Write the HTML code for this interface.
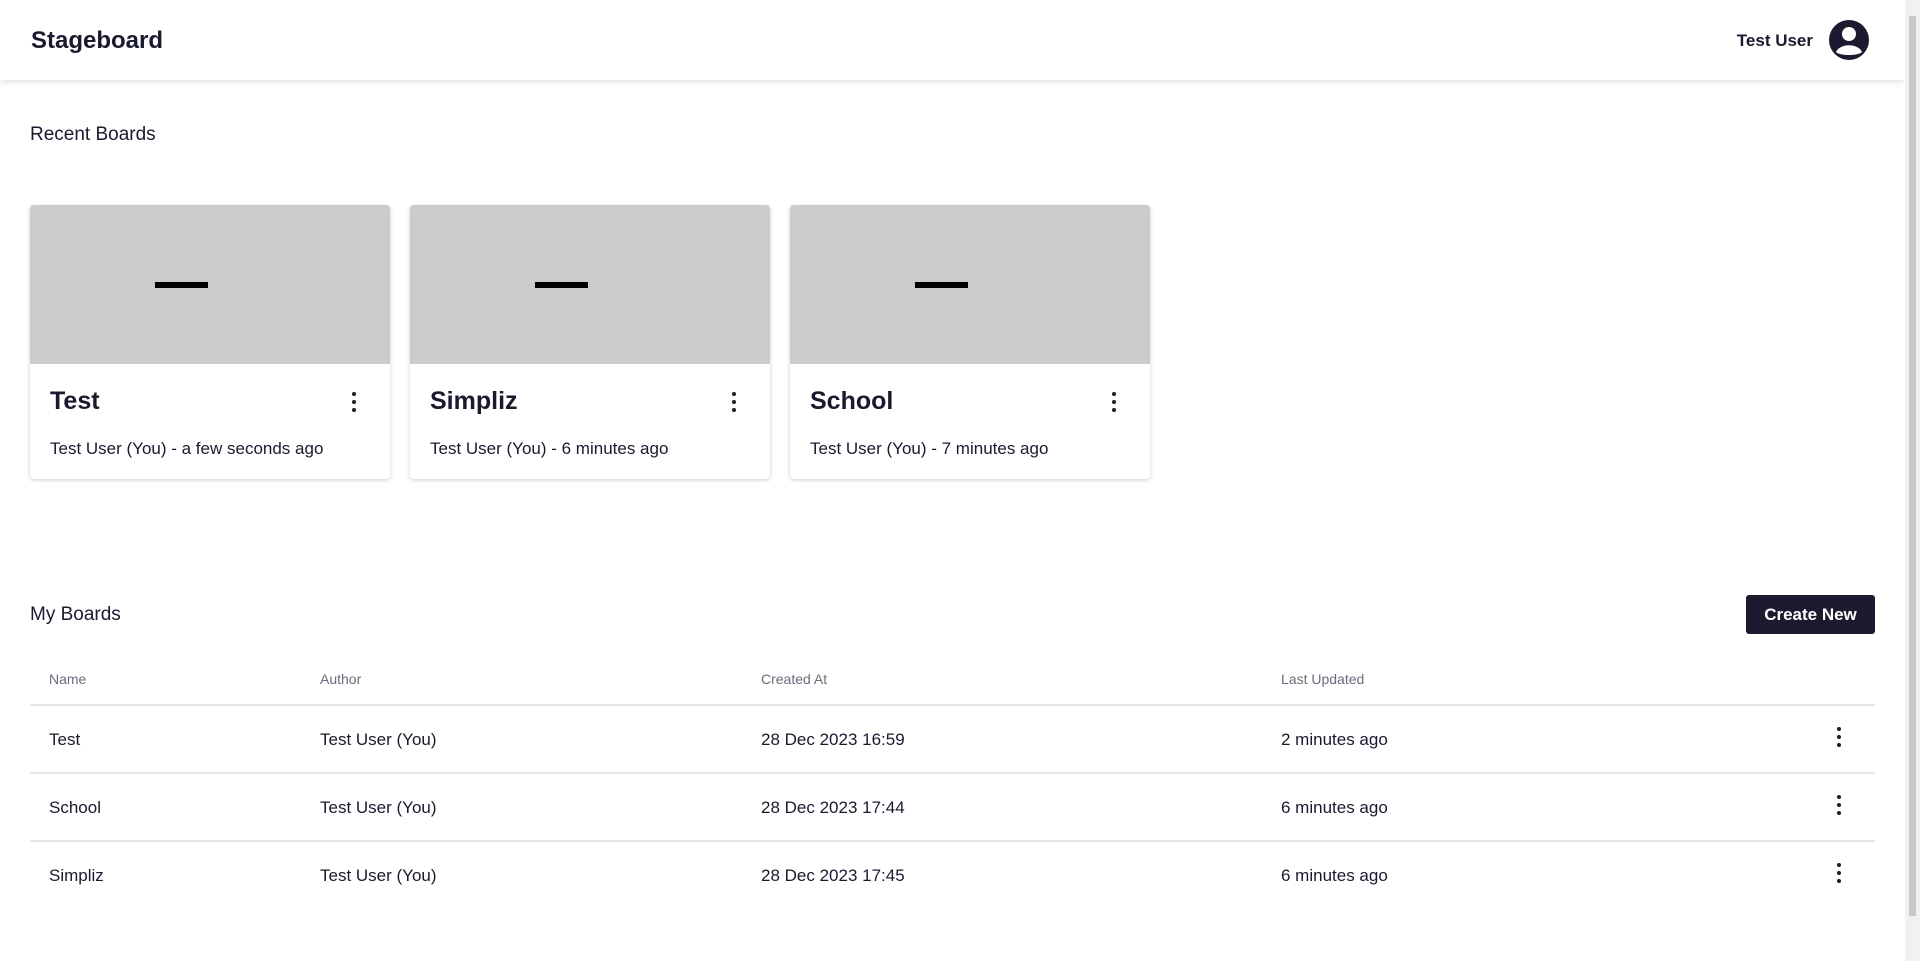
<!DOCTYPE html>
<html><head><meta charset="utf-8"><style>
*{box-sizing:border-box;margin:0;padding:0}
body{width:1920px;height:961px;overflow:hidden;background:#fff;font-family:"Liberation Sans",sans-serif;color:#1a1a2e;position:relative}
.hdr{position:absolute;left:0;top:0;width:1905px;height:80px;background:#fff;box-shadow:0 2px 6px rgba(0,0,0,.12)}
.logo{position:absolute;left:31px;top:27px;font-size:24px;font-weight:600}
.user{position:absolute;right:92px;top:31px;font-size:17px;font-weight:600}
.av{position:absolute;left:1828px;top:19px}
.sb{position:absolute;right:0;top:0;width:15px;height:961px;background:#f1f1f1}
.sb div{position:absolute;left:4px;top:16px;width:7px;height:900px;background:#c8c8c8}
h2{position:absolute;font-size:19px;font-weight:400}
.card{position:absolute;top:205px;width:360px;height:274px;border-radius:4px;box-shadow:0 1px 4px rgba(0,0,0,.2);overflow:hidden;background:#fff}
.img{height:159px;background:#cbcbcb;position:relative}
.img i{position:absolute;left:125px;top:77px;width:53px;height:6px;background:#000}
.ct{position:absolute;left:20px;top:182px;font-size:25px;font-weight:600}
.cs{position:absolute;left:20px;top:234px;font-size:17px}
.k{position:absolute;width:4px}
.k b{display:block;width:4px;height:4px;border-radius:2px;background:#1a1a2e;margin-bottom:4px}
.btn{position:absolute;left:1746px;top:595px;width:129px;height:39px;background:#1c1a2e;color:#fff;font-size:17px;border-radius:3px;text-align:center;line-height:39px;font-weight:600}
.th{position:absolute;top:671px;font-size:14px;color:#6b6b7b}
.td{position:absolute;font-size:17px}
.ln{position:absolute;left:30px;width:1845px;height:2px;background:#e6e6e6}
</style></head><body>
<div class="hdr"><div class="logo">Stageboard</div><div class="user">Test User</div>
<svg class="av" width="42" height="42" viewBox="0 0 42 42"><circle cx="21" cy="21" r="20" fill="#1c1a2e"/><circle cx="21" cy="15" r="7" fill="#fff"/><path d="M8 33 C12 24 30 24 34 33 C30 37 12 37 8 33Z" fill="#fff"/></svg></div>
<div class="sb"><div></div></div>
<h2 style="left:30px;top:124px">Recent Boards</h2>
<div class="card" style="left:30px"><div class="img"><i></i></div><div class="ct">Test</div><div class="cs">Test User (You) - a few seconds ago</div><div class="k" style="left:322px;top:187px"><b></b><b></b><b></b></div></div>
<div class="card" style="left:410px"><div class="img"><i></i></div><div class="ct">Simpliz</div><div class="cs">Test User (You) - 6 minutes ago</div><div class="k" style="left:322px;top:187px"><b></b><b></b><b></b></div></div>
<div class="card" style="left:790px"><div class="img"><i></i></div><div class="ct">School</div><div class="cs">Test User (You) - 7 minutes ago</div><div class="k" style="left:322px;top:187px"><b></b><b></b><b></b></div></div>
<h2 style="left:30px;top:604px">My Boards</h2>
<div class="btn">Create New</div>
<div class="th" style="left:49px">Name</div><div class="th" style="left:320px">Author</div><div class="th" style="left:761px">Created At</div><div class="th" style="left:1281px">Last Updated</div>
<div class="ln" style="top:704px"></div><div class="ln" style="top:772px"></div><div class="ln" style="top:840px"></div>
<div class="td" style="left:49px;top:730px">Test</div><div class="td" style="left:320px;top:730px">Test User (You)</div><div class="td" style="left:761px;top:730px">28 Dec 2023 16:59</div><div class="td" style="left:1281px;top:730px">2 minutes ago</div>
<div class="k" style="left:1837px;top:727px"><b></b><b></b><b></b></div>
<div class="td" style="left:49px;top:798px">School</div><div class="td" style="left:320px;top:798px">Test User (You)</div><div class="td" style="left:761px;top:798px">28 Dec 2023 17:44</div><div class="td" style="left:1281px;top:798px">6 minutes ago</div>
<div class="k" style="left:1837px;top:795px"><b></b><b></b><b></b></div>
<div class="td" style="left:49px;top:866px">Simpliz</div><div class="td" style="left:320px;top:866px">Test User (You)</div><div class="td" style="left:761px;top:866px">28 Dec 2023 17:45</div><div class="td" style="left:1281px;top:866px">6 minutes ago</div>
<div class="k" style="left:1837px;top:863px"><b></b><b></b><b></b></div>
</body></html>
